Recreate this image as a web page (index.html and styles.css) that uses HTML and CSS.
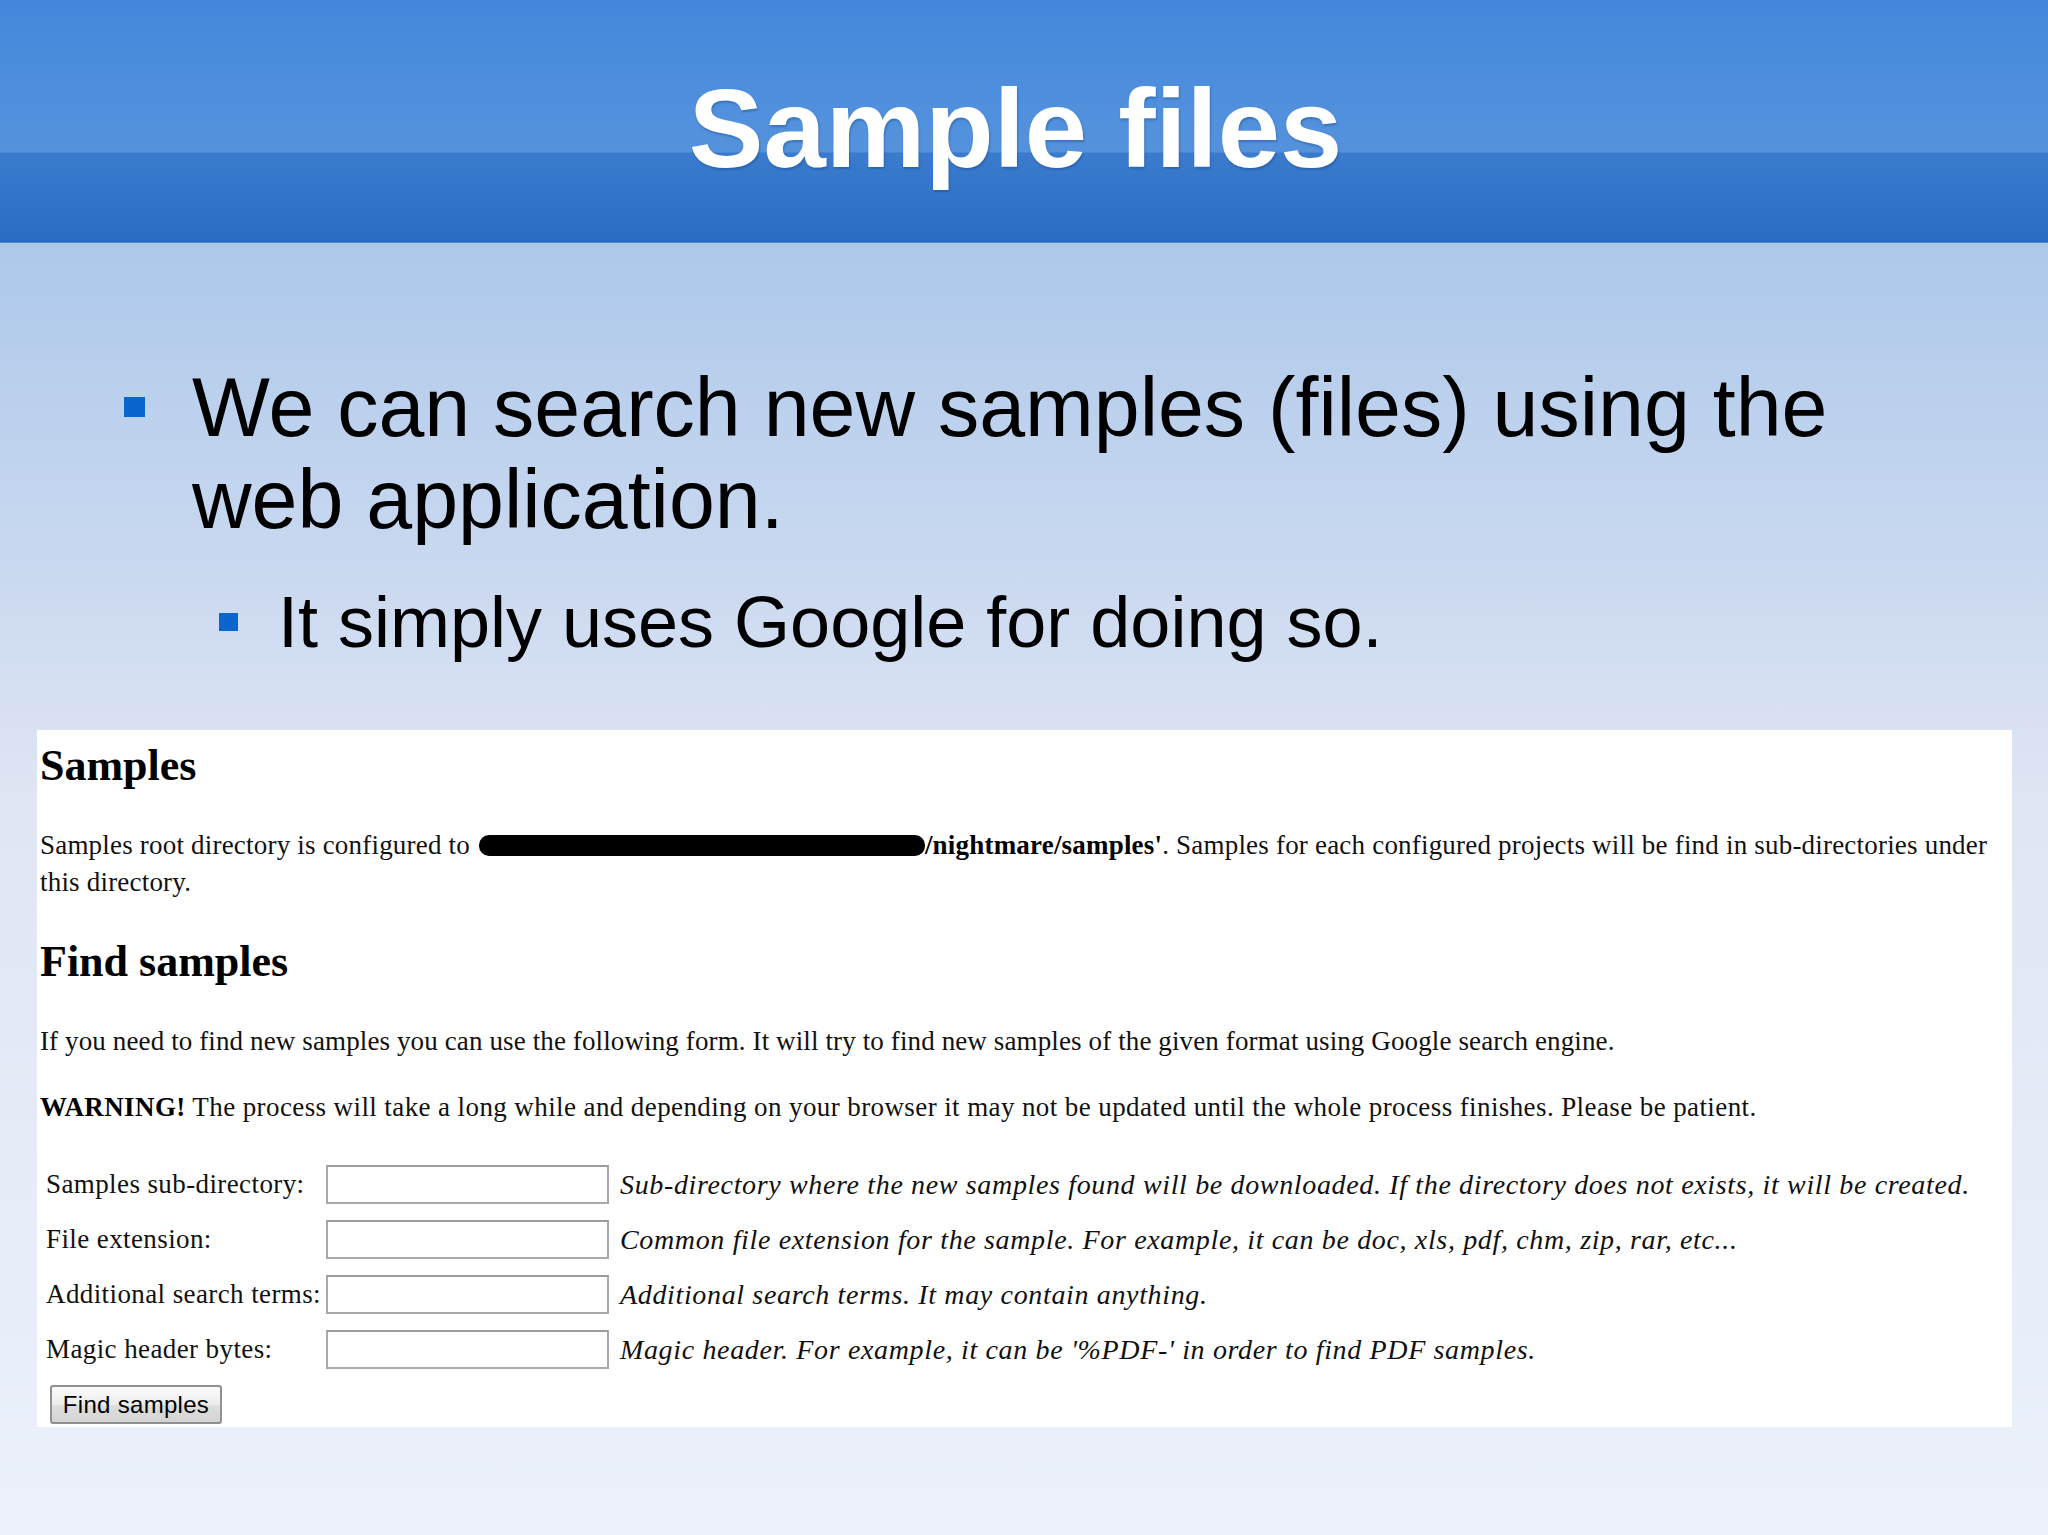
FILE: index.html
```html
<!DOCTYPE html>
<html lang="en">
<head>
<meta charset="utf-8">
<title>Sample files</title>
<link rel="stylesheet" href="styles.css">
</head>
<body>
<div class="slide">
  <header class="title-bar">
    <h1 class="title">Sample files</h1>
  </header>
  <main class="slide-body">
    <ul class="bullets">
      <li class="bullet lvl1"><span class="mark"></span><span class="btext">We can search new samples (files) using the web application.</span></li>
      <li class="bullet lvl2"><span class="mark"></span><span class="btext">It simply uses Google for doing so.</span></li>
    </ul>
    <section class="shot">
      <h2 class="shot-h">Samples</h2>
      <p class="shot-p root">Samples root directory is configured to <b class="path"><span class="redact"></span>/nightmare/samples'</b>. Samples for each configured projects will be find in sub-directories under this directory.</p>
      <h2 class="shot-h find">Find samples</h2>
      <p class="shot-p need">If you need to find new samples you can use the following form. It will try to find new samples of the given format using Google search engine.</p>
      <p class="shot-p warn"><b>WARNING!</b> The process will take a long while and depending on your browser it may not be updated until the whole process finishes. Please be patient.</p>
      <form class="form">
        <label class="lbl" for="f1">Samples sub-directory:</label>
        <input class="field" id="f1" type="text">
        <span class="desc">Sub-directory where the new samples found will be downloaded. If the directory does not exists, it will be created.</span>
        <label class="lbl" for="f2">File extension:</label>
        <input class="field" id="f2" type="text">
        <span class="desc">Common file extension for the sample. For example, it can be doc, xls, pdf, chm, zip, rar, etc...</span>
        <label class="lbl" for="f3">Additional search terms:</label>
        <input class="field" id="f3" type="text">
        <span class="desc">Additional search terms. It may contain anything.</span>
        <label class="lbl" for="f4">Magic header bytes:</label>
        <input class="field" id="f4" type="text">
        <span class="desc">Magic header. For example, it can be '%PDF-' in order to find PDF samples.</span>
        <div class="btn-row"><button class="btn" type="button">Find samples</button></div>
      </form>
    </section>
  </main>
</div>
</body>
</html>
```
FILE: styles.css
```css
html, body {
  margin: 0;
  padding: 0;
}
body {
  width: 2048px;
  height: 1535px;
  overflow: hidden;
  font-family: "Liberation Sans", Arial, sans-serif;
}
.slide {
  width: 2048px;
  height: 1535px;
  display: flex;
  flex-direction: column;
  background: linear-gradient(to bottom, #abc8ec 0px, #adc9ea 250px, #c9d8f0 560px, #dfe6f4 800px, #e6ecf8 1200px, #ecf1fb 1535px);
}
.title-bar {
  height: 242px;
  flex: none;
  border-bottom: 1px solid #5287cf;
  background: linear-gradient(to bottom, #4287db 0px, #4a8ddd 60px, #5592dc 152px, #3a7bcd 153px, #3174c9 200px, #2b6cc2 242px);
  display: flex;
  justify-content: center;
}
.title {
  margin: 0;
  padding: 73px 17px 0 0;
  font-family: "Liberation Sans", Arial, sans-serif;
  font-weight: bold;
  font-size: 112px;
  line-height: 112px;
  color: #ffffff;
  text-shadow: 1px 2px 2px rgba(20, 60, 120, 0.35);
}
.slide-body {
  flex: 1;
  display: flex;
  flex-direction: column;
}
.bullets {
  list-style: none;
  margin: 118px 0 0 0;
  padding: 0;
  color: #000000;
}
.bullet {
  display: flex;
  align-items: flex-start;
}
.lvl1 {
  padding-left: 124px;
  gap: 47px;
  font-size: 82.5px;
  line-height: 92px;
}
.lvl1 .btext {
  width: 1720px;
}
.lvl1 .mark {
  flex: none;
  width: 21px;
  height: 20px;
  margin-top: 36px;
  background: #0a66cc;
}
.lvl2 {
  margin-top: 37px;
  padding-left: 219px;
  gap: 40px;
  font-size: 72px;
  line-height: 81px;
}
.lvl2 .mark {
  flex: none;
  width: 19px;
  height: 18px;
  margin-top: 31px;
  background: #0a66cc;
}
.shot {
  margin: 67px 0 0 37px;
  width: 1975px;
  height: 697px;
  box-sizing: border-box;
  background: #ffffff;
  padding: 11px 0 4px 3px;
  font-family: "Liberation Serif", "Times New Roman", serif;
  color: #111111;
}
.shot-h {
  margin: 0;
  font-size: 44px;
  line-height: 50px;
  font-weight: bold;
  color: #000000;
}
.shot-p {
  margin: 36px 0 0 0;
  font-size: 27px;
  line-height: 37px;
  letter-spacing: 0.4px;
}
.root {
  letter-spacing: 0.2px;
}
.shot-p b {
  color: #000000;
}
.path {
  font-weight: bold;
}
.redact {
  display: inline-block;
  width: 446px;
  height: 21px;
  margin-left: 2px;
  border-radius: 10px;
  background: #000000;
  vertical-align: -2px;
}
.find {
  margin-top: 36px;
}
.need {
  margin-top: 36px;
  letter-spacing: 0.12px;
}
.warn {
  margin-top: 29px;
}
.form {
  margin: 39px 0 0 6px;
  display: grid;
  grid-template-columns: 269px 283px 1fr;
  column-gap: 11px;
  row-gap: 16px;
  align-items: center;
}
.lbl {
  font-size: 27px;
  line-height: 39px;
  letter-spacing: 0.4px;
  white-space: nowrap;
}
.field {
  width: 283px;
  height: 39px;
  box-sizing: border-box;
  margin: 0;
  border: 2px solid #a9a9a9;
  border-top-color: #9c9c9c;
  background: #ffffff;
}
.desc {
  font-style: italic;
  font-size: 28px;
  line-height: 39px;
  letter-spacing: 0.65px;
  white-space: nowrap;
}
.btn-row {
  grid-column: 1 / -1;
}
.btn {
  margin-left: 4px;
  width: 172px;
  height: 39px;
  padding: 0;
  font-family: "Liberation Sans", Arial, sans-serif;
  font-size: 24px;
  letter-spacing: 0.3px;
  color: #000000;
  border: 2px solid #909090;
  border-radius: 3px;
  background: linear-gradient(to bottom, #fbfbfb 0%, #ececec 50%, #dedede 51%, #d4d4d4 100%);
}
```
